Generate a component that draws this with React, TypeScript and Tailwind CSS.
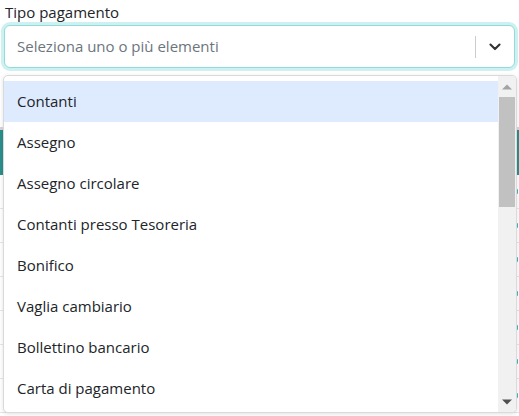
import { useState } from "react";

const OPTIONS = [
  "Contanti",
  "Assegno",
  "Assegno circolare",
  "Contanti presso Tesoreria",
  "Bonifico",
  "Vaglia cambiario",
  "Bollettino bancario",
  "Carta di pagamento",
];

const ROWS = [0, 1, 2, 3, 4, 5, 6];

const App = () => {
  const [selected, setSelected] = useState(0);

  return (
    <div className="relative h-[416px] w-[519px] overflow-hidden bg-white font-['Open_Sans','Noto_Sans',sans-serif] text-[#212529]">
      <div className="flex flex-col">
        <label className="px-[5px] pt-[2px] text-[15px] leading-[20px]">Tipo pagamento</label>
        <div className="px-[1px] pt-[3px]">
          <div className="mx-[3px] flex h-[43px] items-center rounded-[6px] border border-[#93dada] bg-white ring-[3px] ring-[#cdf0f0]">
            <span className="flex-1 pl-[12px] text-[15px] text-[#6c757d]">
              Seleziona uno o più elementi
            </span>
            <span className="h-[22px] w-px bg-[#cccccc]" />
            <span className="flex w-[38px] justify-center">
              <svg width="14" height="14" viewBox="0 0 20 20">
                <path
                  d="M3.5 6.5 L10 13 L16.5 6.5"
                  fill="none"
                  stroke="#333"
                  strokeWidth="3"
                  strokeLinecap="round"
                  strokeLinejoin="round"
                />
              </svg>
            </span>
          </div>
        </div>

        {/* pagina sotto il menu */}
        <div className="mt-[59px] border-t-[3px] border-[#d6d6d6]">
          <div className="h-[45px] bg-[#2b8f8c]" />
          {ROWS.map((r) => (
            <div
              key={r}
              className="flex h-[34px] items-center justify-end border-b border-[#e6e6e6] pr-[1px]"
            >
              <span className="h-[5px] w-[4px] rounded-[1px] bg-[#41b6c4]" />
            </div>
          ))}
        </div>
      </div>

      <div className="absolute left-[3px] top-[75px] flex h-[338px] w-[514px] overflow-hidden rounded-[5px] border border-[#dadada] bg-white shadow-[0_1px_4px_rgba(0,0,0,0.12)]">
        <ul className="flex-1 pt-[5px]">
          {OPTIONS.map((opt, i) => (
            <li
              key={opt}
              onMouseEnter={() => setSelected(i)}
              className={
                i === selected
                  ? "flex h-[41px] items-center bg-[#deebff] pl-[13px] text-[15px]"
                  : "flex h-[41px] items-center pl-[13px] text-[15px]"
              }
            >
              {opt}
            </li>
          ))}
        </ul>
        <div className="flex w-[18px] flex-col items-center bg-[#f1f1f1]">
          <svg width="10" height="6" viewBox="0 0 10 6" className="mt-[8px]">
            <path d="M0 5.5 L5 0.5 L10 5.5 Z" fill="#a3a3a3" />
          </svg>
          <div className="mt-[7px] h-[110px] w-[16px] bg-[#c1c1c1]" />
          <div className="flex-1" />
          <svg width="10" height="6" viewBox="0 0 10 6" className="mb-[7px]">
            <path d="M0 0.5 L10 0.5 L5 5.5 Z" fill="#505050" />
          </svg>
        </div>
      </div>
    </div>
  );
};

export default App;
